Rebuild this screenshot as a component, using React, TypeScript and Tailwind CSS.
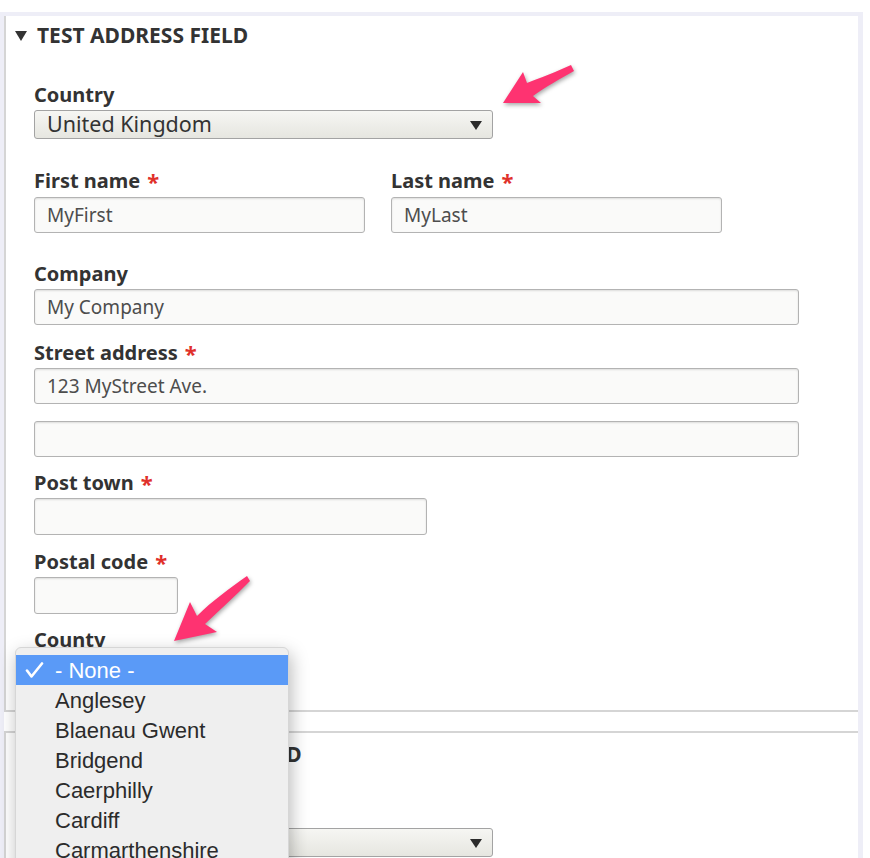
import React from "react";

const label = "text-[20px] font-bold leading-[22px] text-[#333]";
const input =
  "h-[36px] rounded-[3px] border border-[#b3b3b3] bg-[#fafaf9] pl-[12px] text-[19px] leading-[34px] text-[#4d4d4d] shadow-[inset_0_1px_2px_rgba(0,0,0,0.12)]";
const select =
  "relative flex h-[29px] items-center rounded-[3px] border border-[#a3a3a3] bg-gradient-to-b from-[#f6f6f3] to-[#e6e6e0] pl-[12px] text-[21.5px] text-[#333]";

const Req = () => (
  <span className="ml-[7px] align-top text-[22px] leading-[22px] text-[#e0302a]">*</span>
);

const SelectArrow = () => (
  <svg className="absolute right-[10px] top-[10px]" width="12" height="9" viewBox="0 0 12 9">
    <path d="M0 0 H12 L6 9 Z" fill="#2b2b2b" />
  </svg>
);

const Header = ({ title }: { title: string }) => (
  <div className="flex h-[40px] items-center pl-[9px]">
    <svg width="12" height="10" viewBox="0 0 12 10" className="mr-[10px]">
      <path d="M0 0 H12 L6 10 Z" fill="#333" />
    </svg>
    <span className="text-[21px] font-bold uppercase text-[#333]">{title}</span>
  </div>
);

const counties = ["Anglesey", "Blaenau Gwent", "Bridgend", "Caerphilly", "Cardiff", "Carmarthenshire", "Ceredigion"];

export default function App() {
  return (
    <div
      className="relative h-[858px] w-[870px] overflow-hidden bg-white pt-[12px]"
      style={{ fontFamily: '"Noto Sans", "DejaVu Sans", sans-serif' }}
    >
      <div className="w-[863px] border-l-4 border-r-[5px] border-t-4 border-[#eeeef7]">
        {/* first address fieldset */}
        <div className="border-b-2 border-l-2 border-[#d5d5d5] pb-[26px]">
          <Header title="Test address field" />
          <div className="pl-[28px]">
            <div className="mt-[28px] flex flex-col">
              <span className={label}>Country</span>
              <div className={`mt-[4px] w-[459px] ${select}`}>
                United Kingdom
                <SelectArrow />
              </div>
            </div>

            <div className="mt-[31px] flex gap-[26px]">
              <div className="flex flex-col">
                <span className={label}>
                  First name
                  <Req />
                </span>
                <div className={`mt-[5px] w-[331px] ${input}`}>MyFirst</div>
              </div>
              <div className="flex flex-col">
                <span className={label}>
                  Last name
                  <Req />
                </span>
                <div className={`mt-[5px] w-[331px] ${input}`}>MyLast</div>
              </div>
            </div>

            <div className="mt-[30px] flex flex-col">
              <span className={label}>Company</span>
              <div className={`mt-[4px] w-[765px] ${input}`}>My Company</div>
            </div>

            <div className="mt-[17px] flex flex-col">
              <span className={label}>
                Street address
                <Req />
              </span>
              <div className={`mt-[4px] w-[765px] ${input}`}>123 MyStreet Ave.</div>
              <div className={`mt-[17px] w-[765px] ${input}`}></div>
            </div>

            <div className="mt-[15px] flex flex-col">
              <span className={label}>
                Post town
                <Req />
              </span>
              <div className={`mt-[4px] h-[37px] w-[393px] ${input}`}></div>
            </div>

            <div className="mt-[16px] flex flex-col">
              <span className={label}>
                Postal code
                <Req />
              </span>
              <div className={`mt-[4px] h-[37px] w-[144px] ${input}`}></div>
            </div>

            <div className="mt-[15px] flex flex-col">
              <span className={label}>County</span>
              <div className={`mt-[4px] w-[230px] ${select}`}>
                - None -
                <SelectArrow />
              </div>
            </div>
          </div>
        </div>

        <div className="h-[19px]" />

        {/* second address fieldset */}
        <div className="border-l-2 border-t-2 border-[#d5d5d5] pb-[40px]">
          <div className="mt-[2px]">
            <Header title="Another address field" />
          </div>
          <div className="pl-[28px]">
            <div className="mt-[27px] flex flex-col">
              <span className={label}>Country</span>
              <div className={`mt-[4px] w-[459px] ${select}`}>
                United Kingdom
                <SelectArrow />
              </div>
            </div>
          </div>
        </div>
      </div>

      {/* open county list */}
      <div
        className="absolute left-[15px] top-[647px] h-[240px] w-[274px] rounded-t-[6px] border border-[#d6d6d6] bg-[#efefef] pt-[7px] shadow-[2px_6px_18px_rgba(0,0,0,0.28)]"
        style={{ fontFamily: '"Liberation Sans", Arial, sans-serif' }}
      >
        <div className="relative flex h-[30px] items-center bg-[#5a9af7] pl-[39px] text-[22px] text-white">
          <svg className="absolute left-[9px] top-[7px]" width="19" height="16" viewBox="0 0 19 16">
            <path d="M2 8.5 L6.5 14.5 L17 1.5" fill="none" stroke="#fff" strokeWidth="2.6" strokeLinecap="round" strokeLinejoin="round" />
          </svg>
          - None -
        </div>
        {counties.map((c) => (
          <div key={c} className="flex h-[30px] items-center pl-[39px] text-[22px] text-[#2b2b2b]">
            {c}
          </div>
        ))}
      </div>

      {/* pink callout arrows */}
      <svg
        className="pointer-events-none absolute left-0 top-0"
        width="870"
        height="858"
        viewBox="0 0 870 858"
        style={{ filter: "drop-shadow(1px 2px 2px rgba(0,0,0,0.35))" }}
      >
        <path
          d="M503 103 L523 72 L527 83 C540 78 556 72 571 65 L574 71 C560 79 545 87 533 96 L541 103 Z"
          fill="#fe3371"
        />
        <path
          d="M174 641 L190 602 L197 616 C212 601 230 588 247 576 L250 581 C236 595 220 610 205 624 L217 632 Z"
          fill="#fe3371"
        />
      </svg>
    </div>
  );
}
